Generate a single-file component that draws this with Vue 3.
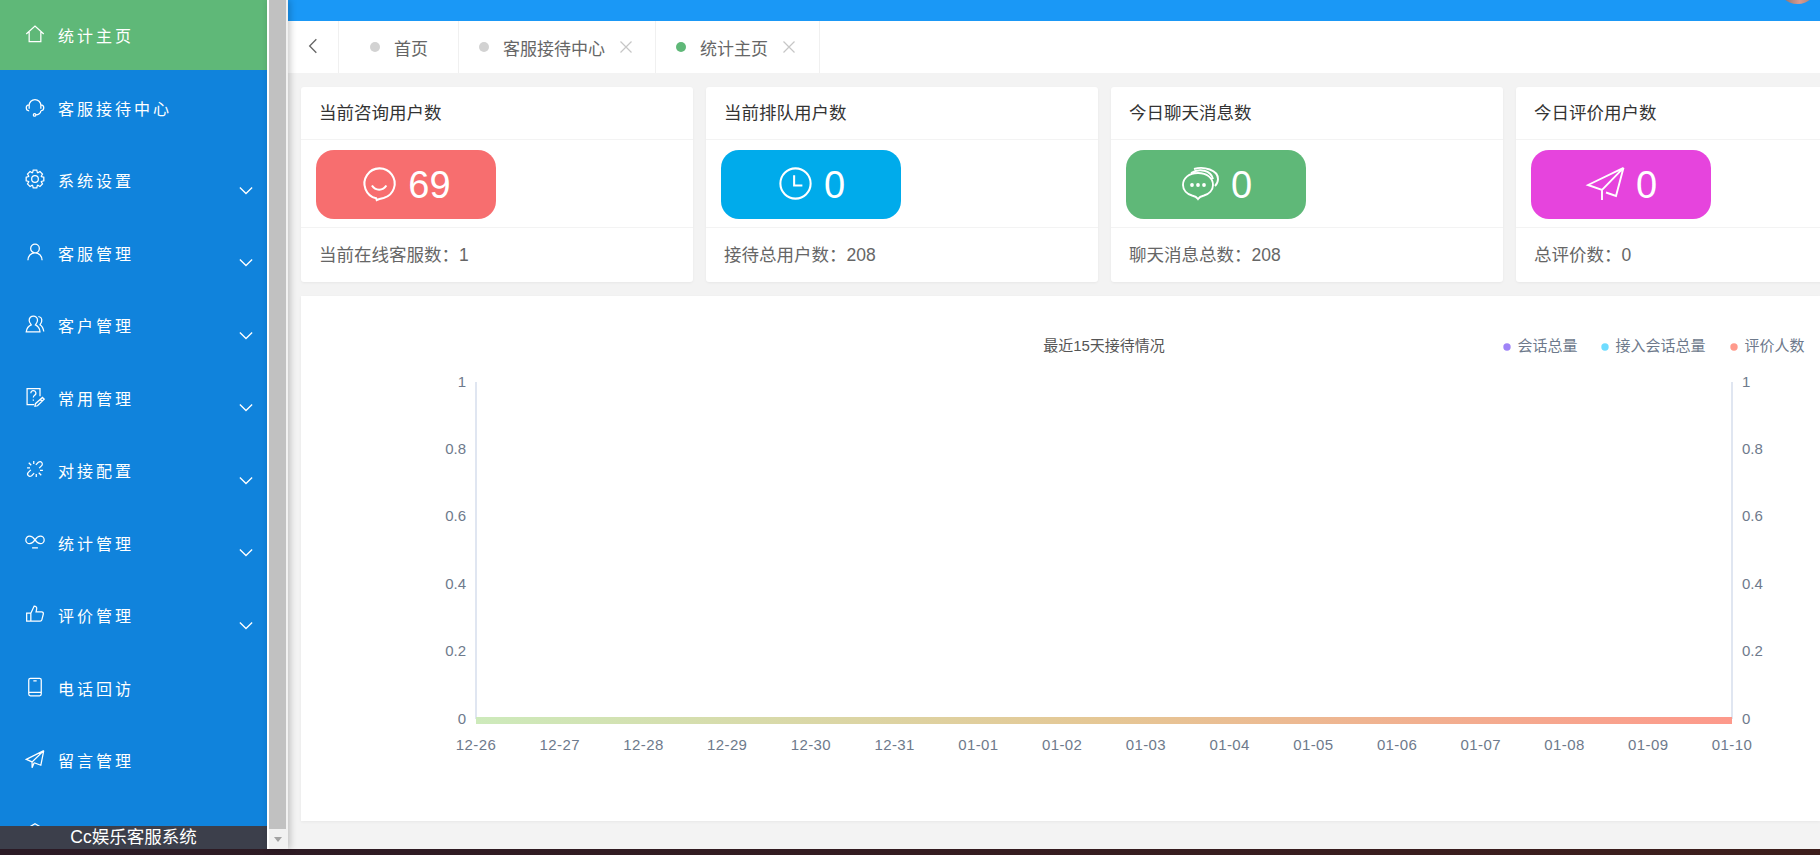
<template>
  <div class="page">
    <div class="desk">
      <!-- left menu -->
      <aside class="sidebar">
        <nav class="menu">
          <div
            v-for="item in menu"
            :key="item.name"
            class="menu-item"
            :class="{ active: item.active }"
          >
            <svg class="menu-icon" viewBox="0 0 24 24"><path :d="item.icon" /></svg>
            <span class="menu-label">{{ item.name }}</span>
            <svg v-if="item.sub" class="menu-arrow" viewBox="0 0 16 10"><path d="M1 1.5 8 8.5 15 1.5" /></svg>
          </div>
        </nav>
        <div class="brand">Cc娱乐客服系统</div>
      </aside>

      <div class="scroll">
        <div class="scroll-thumb"></div>
        <div class="scroll-arrow"><i></i></div>
      </div>

      <main class="main">
        <header class="topbar">
          <div class="avatar"></div>
        </header>

        <div class="tabs">
          <div class="tab-back">
            <svg viewBox="0 0 12 18"><path d="M10 1 2 9 10 17" /></svg>
          </div>
          <div
            v-for="tab in tabs"
            :key="tab.name"
            class="tab"
            :class="{ closable: tab.closable }"
          >
            <span class="tab-dot" :class="{ on: tab.on }"></span>
            <span class="tab-name">{{ tab.name }}</span>
            <svg v-if="tab.closable" class="tab-close" viewBox="0 0 12 12"><path d="M.5.5 11.5 11.5M11.5.5.5 11.5" /></svg>
          </div>
        </div>

        <div class="cards">
          <section v-for="card in cards" :key="card.title" class="card">
            <div class="card-title">{{ card.title }}</div>
            <div class="card-body">
              <div class="pill" :class="card.color">
                <svg class="pill-icon" :class="{ wide: card.box }" :viewBox="card.box || '0 0 24 24'">
                  <path :d="card.icon" />
                  <template v-if="card.color === 'green'">
                    <circle v-for="cx in [10, 16, 22]" :key="cx" class="dot" :cx="cx" cy="18" r="1.9" />
                  </template>
                </svg>
                <span class="pill-num">{{ card.value }}</span>
              </div>
            </div>
            <div class="card-foot">{{ card.foot }}</div>
          </section>
        </div>

        <section class="chart">
          <svg class="chart-svg" width="1518" height="525">
            <defs>
              <linearGradient id="zero-bar" x1="0" x2="1" y1="0" y2="0">
                <stop offset="0" stop-color="#cdeabb" />
                <stop offset="0.5" stop-color="#e5c795" />
                <stop offset="1" stop-color="#fd998b" />
              </linearGradient>
            </defs>

            <text class="chart-title" x="802" y="49">最近15天接待情况</text>

            <g v-for="l in legend" :key="l.name">
              <circle :cx="l.x" cy="51" r="3.7" :fill="l.color" />
              <text class="chart-label" :x="l.x + 10.5" y="49">{{ l.name }}</text>
            </g>

            <line class="axis" x1="174" y1="86" x2="174" y2="423" />
            <line class="axis" x1="1430" y1="86" x2="1430" y2="423" />
            <rect x="174" y="421" width="1256" height="7" fill="url(#zero-bar)" />

            <g v-for="t in yTicks" :key="t.label">
              <text class="chart-label end" x="164" :y="t.y">{{ t.label }}</text>
              <text class="chart-label" x="1440" :y="t.y">{{ t.label }}</text>
            </g>
            <text
              v-for="d in xTicks"
              :key="d.label"
              class="chart-label middle date"
              :x="d.x"
              y="448"
            >{{ d.label }}</text>
          </svg>
        </section>
      </main>
    </div>
    <div class="strip"></div>
  </div>
</template>

<script setup>
// gear outline for the settings entry
function gearPath() {
  const pts = []
  for (let i = 0; i < 8; i++) {
    const a = (i * Math.PI) / 4
    for (const [r, off] of [[8.2, -0.36], [10.8, -0.2], [10.8, 0.2], [8.2, 0.36]]) {
      pts.push(`${(12 + r * Math.cos(a + off)).toFixed(2)} ${(12 + r * Math.sin(a + off)).toFixed(2)}`)
    }
  }
  return `M${pts.join('L')}ZM12 8a4 4 0 1 0 0 8 4 4 0 0 0 0-8Z`
}

const menu = [
  { name: '统计主页', active: true, icon: 'M1.5 12 12 2.5 22.5 12M5 9.5V21H19V9.5' },
  { name: '客服接待中心', icon: 'M5 14V10a7 7 0 0 1 14 0v4M5 9.5a3 3 0 0 0 0 7M19 9.5a3 3 0 0 1 0 7M19 16.5c0 3-3 5-6 5M10 21.5a1.5 1.5 0 1 0 3 0 1.5 1.5 0 0 0-3 0' },
  { name: '系统设置', sub: true, icon: gearPath() },
  { name: '客服管理', sub: true, icon: 'M12 2.5a5.2 5.2 0 1 0 0 10.4 5.2 5.2 0 0 0 0-10.4ZM3.5 22c0-5 3.5-9 8.500-9s8.500 4 8.500 9' },
  { name: '客户管理', sub: true, icon: 'M10 2.500a5 5 0 0 0-5 5c0 2.500 1.500 4 2.500 5.500C5 14 2 17 1.500 21.500H18c0-4-3-7.500-5.500-8.500 1-1.500 2.500-3 2.500-5.500a5 5 0 0 0-5-5ZM16 3c3 .5 4.500 3 4 6-.3 1.500-1 2.500-2 4 2.500 1.500 4 4.500 4.500 8' },
  { name: '常用管理', sub: true, icon: 'M18 11V2H2.500v19H11M7 7.500a3 3 0 1 1 4.500 2.500c-1 .7-1.500 1.300-1.500 2.500M10 15v1.500M21 12.500l2 2-8 8-3 .5.500-3ZM18.500 15l2 2' },
  { name: '对接配置', sub: true, icon: 'M13 7l3-3c1.500-1 3-1 4 0s1 3 0 4l-3 3M11 17l-3 3c-1.500 1-3 1-4 0s-1-3 0-4l3-3M4.500 4.500l3 3M19.500 19.500l-3-3M2.500 10.500h3.500M21.500 13.500H18M10.500 2.500V6M13.500 21.500V18' },
  { name: '统计管理', sub: true, icon: 'M12 9.500C10 6.500 8 5 5.500 5a4.500 4.500 0 0 0 0 9c2.500 0 4.500-1.500 6.500-4.500S16 5 18.500 5a4.500 4.500 0 0 1 0 9c-2.500 0-4.500-1.500-6.500-4.500ZM8.500 19h7' },
  { name: '评价管理', sub: true, icon: 'M7 11v9.500H2V11ZM7 11l4-8.500c2 0 3.500 1.500 3 3.500l-.7 3.500H20c1.500 0 2.300 1 2 2.500l-1.800 7c-.3 1-1 1.500-2 1.500H7' },
  { name: '电话回访', icon: 'M6.500 1.500h11a2 2 0 0 1 2 2v17a2 2 0 0 1-2 2h-11a2 2 0 0 1-2-2v-17a2 2 0 0 1 2-2ZM4.500 18.500h15M10 4.500h4M12 20.300v.2' },
  { name: '留言管理', icon: 'M22.500 2 1.500 12.500 8.500 15.500ZM22.500 2 19 19.500 11 16.500M8.500 15.500V22.500L11 16.500' },
  { name: '', icon: 'M12 2 22 8 12 14 2 8ZM5 10v8c4 3 10 3 14 0v-8' }
]

const tabs = [
  { name: '首页' },
  { name: '客服接待中心', closable: true },
  { name: '统计主页', closable: true, on: true }
]

const cards = [
  {
    title: '当前咨询用户数', value: 69, foot: '当前在线客服数：1', color: 'red',
    icon: 'M9.500 22.700A11 11 0 1 1 15 22.600C13 23 11.500 23.300 10 24ZM6.500 13.500c2.500 4 8 4 10.500 0'
  },
  {
    title: '当前排队用户数', value: 0, foot: '接待总用户数：208', color: 'sky',
    icon: 'M12 1a11 11 0 1 0 0 22 11 11 0 0 0 0-22ZM11 6v7.500h6'
  },
  {
    title: '今日聊天消息数', value: 0, foot: '聊天消息总数：208', color: 'green', box: '0 0 37 33',
    icon: 'M16 6C7 6 1 11 1 18c0 5 4 9 9 10.500 3 .8 5 2 6 3.500 1-1.500 3-2.700 6-3.500 5-1.500 9-5.500 9-10.500 0-7-6-12-15-12ZM9 6c8-5 20-3 22 6M12 2c10-3 24 1 24 10 0 3-1 5-3 7'
  },
  {
    title: '今日评价用户数', value: 0, foot: '总评价数：0', color: 'pink', box: '0 0 37 33',
    icon: 'M36.500 .8 1 18 15 23ZM36.500 .8 29 29 19 25.500M15 23V33'
  }
]

const legend = [
  { name: '会话总量', x: 1205, color: '#9f84f7' },
  { name: '接入会话总量', x: 1303, color: '#6fdcff' },
  { name: '评价人数', x: 1432, color: '#ff9a8c' }
]

const yTicks = ['1', '0.8', '0.6', '0.4', '0.2', '0'].map((label, i) => ({
  label,
  y: 85 + i * 67.4
}))

const dates = [
  '12-26', '12-27', '12-28', '12-29', '12-30', '12-31', '01-01', '01-02',
  '01-03', '01-04', '01-05', '01-06', '01-07', '01-08', '01-09', '01-10'
]
const xTicks = dates.map((label, i) => ({ label, x: 174 + (i * 1256) / 15 }))
</script>

<style>
html,
body {
  margin: 0;
  overflow: hidden;
}
</style>

<style scoped>
.page {
  height: 100vh;
  display: flex;
  flex-direction: column;
  overflow: hidden;
  font-family: "Liberation Sans", "Noto Sans CJK SC", sans-serif;
  background: #f3f3f3;
}

.desk {
  flex: 1;
  min-height: 0;
  display: flex;
}

.strip {
  height: 6px;
  background: linear-gradient(90deg, #2b1a25, #3d1e1c);
}

/* Sidebar */
.sidebar {
  width: 267px;
  flex: none;
  display: flex;
  flex-direction: column;
  background: #1083dc;
}

.menu {
  flex: 1;
  min-height: 0;
  overflow: hidden;
}

.menu-item {
  height: 72.5px;
  box-sizing: border-box;
  padding: 0 14px 0 25px;
  display: flex;
  align-items: center;
  color: #fff;
}

.menu-item.active {
  height: 70px;
  margin-bottom: 2.5px;
  padding-top: 2px;
  background: #5fb878;
}

.menu-icon {
  width: 20px;
  height: 20px;
  flex: none;
  margin-top: -4px;
  fill: none;
  stroke: #fff;
  stroke-width: 1.5;
}

.menu-label {
  margin-left: 13px;
  margin-top: -2px;
  font-size: 16px;
  letter-spacing: 3px;
  white-space: nowrap;
}

.menu-arrow {
  width: 14px;
  height: 9px;
  margin-left: auto;
  margin-top: 18px;
  fill: none;
  stroke: #fff;
  stroke-width: 1.5;
}

.brand {
  height: 23px;
  flex: none;
  background: #3c3f4b;
  color: #fff;
  font-size: 17.5px;
  line-height: 23px;
  text-align: center;
}

/* Scrollbar next to the sidebar */
.scroll {
  width: 21px;
  box-sizing: border-box;
  flex: none;
  padding-right: 2px;
  border-left: 2px solid #fff;
  display: flex;
  flex-direction: column;
  background: #f1f1f1;
  box-shadow: 2px 0 7px rgba(0, 0, 0, 0.22);
  position: relative;
  z-index: 1;
}

.scroll-thumb {
  height: 829px;
  background: #c1c1c1;
}

.scroll-arrow {
  flex: 1;
  display: flex;
  align-items: center;
  justify-content: center;
}

.scroll-arrow i {
  border-left: 4.5px solid transparent;
  border-right: 4.5px solid transparent;
  border-top: 5px solid #a3a3a3;
}

/* Main column */
.main {
  flex: 1;
  min-width: 0;
  overflow: hidden;
  display: flex;
  flex-direction: column;
}

.topbar {
  height: 21px;
  flex: none;
  display: flex;
  justify-content: flex-end;
  overflow: hidden;
  background: #1a98f6;
}

.avatar {
  width: 41px;
  height: 41px;
  margin: -37px 2px 0 0;
  border-radius: 50%;
  background: linear-gradient(90deg, #6e6460, #d99a90 55%, #8d7670);
}

.tabs {
  height: 52px;
  flex: none;
  display: flex;
  background: #fff;
}

.tab-back {
  width: 51px;
  box-sizing: border-box;
  border-right: 1px solid #f0f0f0;
  display: flex;
  align-items: center;
  justify-content: center;
  padding-right: 1px;
  padding-bottom: 3px;
}

.tab-back svg {
  width: 10px;
  height: 16px;
  fill: none;
  stroke: #666;
  stroke-width: 1.6;
}

.tab {
  display: flex;
  align-items: center;
  box-sizing: border-box;
  padding: 0 30px 0 31px;
  border-right: 1px solid #f0f0f0;
  color: #666;
  font-size: 17px;
}

.tab.closable {
  padding: 0 23px 0 20px;
}

.tab.closable:last-child {
  padding-right: 24px;
}

.tab-dot {
  width: 10px;
  height: 10px;
  border-radius: 50%;
  background: #d2d2d2;
}

.tab-dot.on {
  background: #5fb878;
}

.tab-name {
  margin-left: 14px;
  white-space: nowrap;
}

.tab-close {
  width: 12px;
  height: 12px;
  margin-left: 15px;
  fill: none;
  stroke: #c6c6c6;
  stroke-width: 1.2;
}

/* Stat cards */
.cards {
  display: flex;
  gap: 13px;
  padding: 14px 0 0 13px;
  flex: none;
}

.card {
  width: 392px;
  flex: none;
  background: #fff;
  border-radius: 3px;
  box-shadow: 0 1px 3px rgba(0, 0, 0, 0.05);
}

.card-title {
  height: 52px;
  padding-left: 18px;
  line-height: 52px;
  font-size: 17.5px;
  color: #333;
  border-bottom: 1px solid #f3f3f3;
}

.card-body {
  height: 88px;
  box-sizing: border-box;
  padding: 10px 0 0 15px;
  border-bottom: 1px solid #f3f3f3;
}

.pill {
  width: 180px;
  height: 69px;
  box-sizing: border-box;
  padding-left: 2px;
  border-radius: 18px;
  display: flex;
  align-items: center;
  justify-content: center;
  gap: 12px;
  color: #fff;
}

.pill.red { background: #f76e6f; }
.pill.sky { background: #00abeb; }
.pill.green { background: #5fb878; }
.pill.pink { background: #e644dd; }

.pill-icon {
  width: 33px;
  height: 33px;
  margin-top: -2px;
  overflow: visible;
  fill: none;
  stroke: #fff;
  stroke-width: 1.5;
}

.pill-icon.wide {
  width: 37px;
  stroke-width: 1.9;
}

.pill-icon .dot {
  fill: #fff;
  stroke: none;
}

.pill-num {
  font-size: 38px;
  line-height: 1;
}

.card-foot {
  height: 54px;
  padding-left: 18px;
  line-height: 55px;
  font-size: 17.5px;
  color: #666;
}

/* Chart */
.chart {
  margin: 14px 0 0 13px;
  height: 525px;
  flex: none;
  background: #fff;
  box-shadow: 0 1px 3px rgba(0, 0, 0, 0.05);
}

.chart-svg {
  display: block;
  margin-left: 1px;
}

.chart-title {
  font-size: 15px;
  fill: #555;
  text-anchor: middle;
  dominant-baseline: central;
}

.chart-label {
  font-size: 15px;
  fill: #6e7a8c;
  dominant-baseline: central;
}

.chart-label.end {
  text-anchor: end;
}

.chart-label.middle {
  text-anchor: middle;
}

.chart-label.date {
  letter-spacing: 0.4px;
}

.axis {
  stroke: #e0e6f1;
  stroke-width: 2;
}
</style>
